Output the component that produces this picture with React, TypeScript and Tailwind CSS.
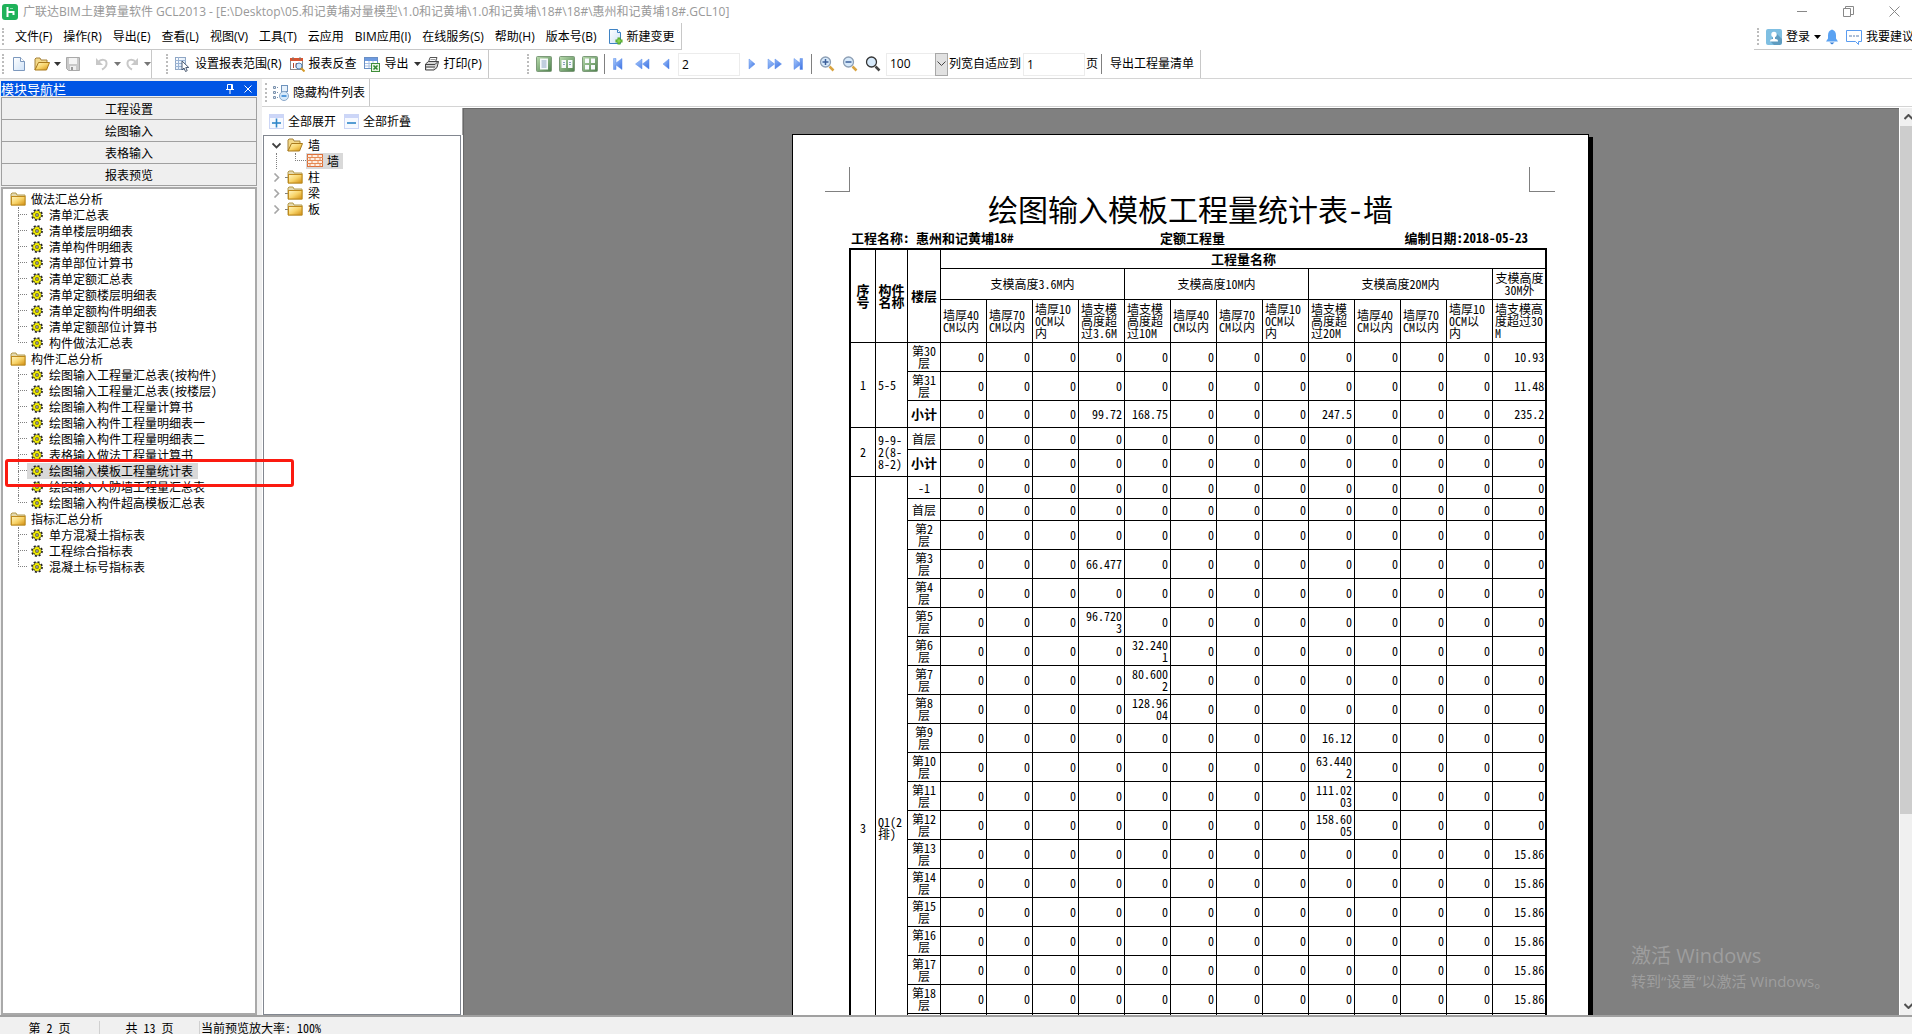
import React from "react";

const UI = "font-['Open_Sans','Noto_Sans_CJK_SC',sans-serif]";
const SONG = "font-['Noto_Sans_Mono_CJK_SC','Noto_Sans_CJK_SC',monospace]";

/* ---------- icons ---------- */

type IconProps = { className?: string };

const Gradients = () => (
  <svg width="0" height="0" className="absolute" aria-hidden="true">
    <defs>
      <linearGradient id="gold" x1="0" y1="0" x2="1" y2="1">
        <stop offset="0" stopColor="#fff6c4" />
        <stop offset="0.5" stopColor="#f8d46a" />
        <stop offset="1" stopColor="#d08d10" />
      </linearGradient>
      <linearGradient id="blue" x1="0" y1="0" x2="1" y2="1">
        <stop offset="0" stopColor="#a9cbfc" />
        <stop offset="1" stopColor="#3a6fe2" />
      </linearGradient>
      <linearGradient id="green" x1="0" y1="0" x2="1" y2="1">
        <stop offset="0" stopColor="#b9dcae" />
        <stop offset="1" stopColor="#4d7f4c" />
      </linearGradient>
      <linearGradient id="paper" x1="0" y1="0" x2="1" y2="1">
        <stop offset="0" stopColor="#ffffff" />
        <stop offset="1" stopColor="#cfe2f7" />
      </linearGradient>
    </defs>
  </svg>
);

const Svg = ({ className = "", children }: React.PropsWithChildren<IconProps>) => (
  <svg width="16" height="16" viewBox="0 0 16 16" fill="none" className={`shrink-0 ${className}`} aria-hidden="true">
    {children}
  </svg>
);

const Logo = () => (
  <Svg>
    <rect width="16" height="16" rx="3" fill="#1fb25a" />
    <path d="M5.500 3v10" stroke="#fff" strokeWidth="2" />
    <path d="M6 8h5.500v3" stroke="#fff" strokeWidth="2" />
    <path d="M8 4.500h3" stroke="#8fe0b0" strokeWidth="1" />
  </Svg>
);

const Folder = () => (
  <Svg>
    <path d="M1 14V3l1-1h4l1 2h8v10z" fill="#e3d9b0" stroke="#b39a4c" />
    <rect x="1.500" y="5.500" width="13.500" height="8.500" fill="url(#gold)" stroke="#c08a1c" />
  </Svg>
);

const FolderOpen = () => (
  <Svg>
    <path d="M1 14V3l1-1h4l1 2h6v3H5z" fill="#f3d98a" stroke="#a5823a" />
    <path d="M1 14L4.500 6.500H15.500L12.500 14z" fill="url(#gold)" stroke="#a97a1c" />
  </Svg>
);

const Gear = () => (
  <svg width="12" height="12" viewBox="0 0 12 12" className="shrink-0" aria-hidden="true">
    <circle cx="6" cy="6" r="5" fill="none" stroke="#222" strokeWidth="1.800" strokeDasharray="2 1.920" />
    <circle cx="6" cy="6" r="4.300" fill="#f7f200" stroke="#222" strokeWidth="0.500" />
    <circle cx="6" cy="6" r="1.300" fill="#fff" stroke="#333" strokeWidth="0.900" />
    <path d="M3.300 3.300l1 1M8.700 3.300l-1 1M3.300 8.700l1-1M8.700 8.700l-1-1" stroke="#333" strokeWidth="0.800" />
  </svg>
);

const Wall = () => (
  <Svg>
    <rect x="0.500" y="1.500" width="15" height="12" fill="#fdeee2" stroke="#dd6f3a" />
    <path d="M0 4.500h16M0 7.500h16M0 10.500h16M5 1.500v3M11 1.500v3M8 4.500v3M3 4.500v3M5 7.500v3M11 7.500v3M8 10.500v3M3 10.500v3M13 10.500v3M13 4.500v3" stroke="#e58a55" />
  </Svg>
);

const NewDoc = () => (
  <Svg>
    <path d="M2.500 1.500h7l4 4v9h-11z" fill="url(#paper)" stroke="#7c98bd" />
    <path d="M9.500 1.500v4h4" stroke="#7c98bd" fill="#fff" />
  </Svg>
);

const NewChange = () => (
  <Svg>
    <path d="M1.500 0.500h8l3 3v11h-11z" fill="url(#paper)" stroke="#3f83c4" />
    <path d="M9.500 0.500v3h3" stroke="#3f83c4" fill="#fff" />
    <path d="M11 8.500v7M7.500 12h7" stroke="#4aa522" strokeWidth="3" />
    <path d="M11 9.500v5M8.500 12h5" stroke="#a0e060" />
  </Svg>
);

const Save = () => (
  <Svg>
    <path d="M1.500 1.500h13v13h-11l-2-2z" fill="#c9c9c9" stroke="#a9a9a9" />
    <rect x="4" y="2" width="8" height="6" fill="#f4f4f4" />
    <rect x="5" y="10" width="6" height="4" fill="#eee" />
    <rect x="6" y="11" width="2" height="3" fill="#999" />
  </Svg>
);

const Undo = ({ className = "" }: IconProps) => (
  <Svg className={className}>
    <path d="M4 6.500C7 2.500 13 3 12.500 8c-.3 3-2.500 4.500-4.500 5.500" stroke="#c8c8c8" strokeWidth="2" />
    <path d="M2 2v7h7z" fill="#c8c8c8" />
  </Svg>
);

const Range = () => (
  <Svg>
    <rect x="1.500" y="1.500" width="10" height="12" fill="url(#paper)" stroke="#8fa6c4" />
    <path d="M1 4.500h11M1 7.500h11M1 10.500h11M4.500 1v13" stroke="#9bb4d4" />
    <path d="M8 5v9l2-2 1.500 3.500 1.700-.8L11.800 11.500h3z" fill="#fff" stroke="#4b5a70" />
  </Svg>
);

const Check = () => (
  <Svg>
    <rect x="1.500" y="2.500" width="12" height="11" fill="#fff" stroke="#8a8a8a" />
    <rect x="1" y="2" width="13" height="3" fill="#d9542f" />
    <path d="M4 1v3M11 1v3" stroke="#777" />
    <path d="M4.500 7v5M7 7.500h2.500v4H7z" stroke="#b5482b" />
    <circle cx="10" cy="10" r="3" fill="#cfe6fa" stroke="#5581b1" />
    <path d="M12 12l3.500 3.500" stroke="#d59a2a" strokeWidth="2" />
  </Svg>
);

const Export = () => (
  <Svg>
    <rect x="0.500" y="1.500" width="13" height="11" fill="#fff" stroke="#6a8fc4" />
    <rect x="1" y="2" width="12" height="3" fill="#6d9be0" />
    <path d="M1 7.500h12M1 10h12M5 5v7M9 5v7" stroke="#a8c0e4" />
    <rect x="7.500" y="7.500" width="8" height="8" fill="#e7f3e2" stroke="#3f8e3a" />
    <path d="M9.500 9.500l4 4M13.500 9.500l-4 4" stroke="#2f8530" strokeWidth="1.500" />
  </Svg>
);

const Printer = () => (
  <Svg>
    <path d="M4.500 6L6 1.500h7L11.500 6" fill="#fff" stroke="#555" />
    <path d="M6.500 3.500h5" stroke="#999" />
    <path d="M1.500 8l3-2.500h10l-1.500 6-3 2.500h-8.500z" fill="#d6d6d6" stroke="#444" />
    <path d="M1.500 8.500h9.500l3-3M2 11h9" stroke="#444" />
    <path d="M3 12.500h6" stroke="#fff" />
  </Svg>
);

const ViewFrame = ({ children }: React.PropsWithChildren) => (
  <Svg>
    <rect x="0.500" y="0.500" width="15" height="15" rx="1" fill="url(#green)" stroke="#7d9a7a" />
    {children}
  </Svg>
);
const ViewOne = () => (
  <ViewFrame>
    <rect x="4" y="2.500" width="8" height="11" fill="#f7fafc" />
    <path d="M5.500 5h5M5.500 7h5M5.500 9h5M5.500 11h5" stroke="#8aa2c0" />
  </ViewFrame>
);
const ViewTwo = () => (
  <ViewFrame>
    <path d="M2.500 4H7v8H2.500zM9 4h4.500v8H9z" fill="#f7fafc" />
    <path d="M4 6.500h2M4 8.500h2M10 6.500h2M10 8.500h2" stroke="#8aa2c0" />
  </ViewFrame>
);
const ViewFour = () => (
  <ViewFrame>
    <path d="M3 2.500h4v4.500H3zM9 2.500h4v4.500H9zM3 9h4v4.500H3zM9 9h4v4.500H9z" fill="#f7fafc" />
  </ViewFrame>
);

const Nav = ({ kind }: { kind: "first" | "rew" | "prev" | "next" | "fwd" | "last" }) => (
  <Svg>
    <g fill="url(#blue)" stroke="#5d8fea" strokeWidth="0.500">
      {kind === "first" && <path d="M3.500 2.500H6v4.500l6-4.500v11L6 9v4.500H3.500z" />}
      {kind === "rew" && <path d="M8 3v10L1.500 8zM15 3v10L8.500 8z" />}
      {kind === "prev" && <path d="M11 3v10L5 8z" />}
      {kind === "next" && <path d="M5 3v10l6-5z" />}
      {kind === "fwd" && <path d="M1 3v10l6.500-5zM8 3v10l6.500-5z" />}
      {kind === "last" && <path d="M12.500 2.500H10v4.500L4 2.500v11L10 9v4.500h2.500z" />}
    </g>
  </Svg>
);

const Magnifier = ({ sign }: { sign?: "+" | "-" }) => (
  <Svg>
    <circle cx="6.500" cy="6" r="5" fill="#d7eafb" stroke={sign ? "#8d9fb5" : "#333"} strokeWidth="1.300" />
    {sign && <path d="M3.500 6h6" stroke="#3c5f9a" strokeWidth="1.500" />}
    {sign === "+" && <path d="M6.500 3v6" stroke="#3c5f9a" strokeWidth="1.500" />}
    <path d="M10.500 10.500l4 4" stroke={sign ? "#d9a441" : "#444"} strokeWidth="2.500" />
  </Svg>
);

const Caret = ({ className = "" }: IconProps) => (
  <svg width="7" height="4" viewBox="0 0 7 4" className={`shrink-0 ${className}`} aria-hidden="true">
    <path d="M0 0h7L3.500 4z" fill="currentColor" />
  </svg>
);

const User = () => (
  <Svg>
    <rect width="16" height="16" rx="2" fill="#7fbfe2" />
    <path d="M10 4l6 6v4l-2 2H8l-4-4z" fill="#5f9cc0" />
    <circle cx="8" cy="5.500" r="2.700" fill="#fff" />
    <path d="M4 12.500c0-2.500 2-2.500 4-2.500s4 0 4 2.500z" fill="#fff" />
    <path d="M7 7h2v4H7z" fill="#fff" />
  </Svg>
);

const Bell = () => (
  <Svg>
    <path d="M8 0.500c-3 1-4 3-4 6v3L2 12.500h12L12 9.500v-3c0-3-1-5-4-6z" fill="#5aa2f2" />
    <path d="M5.500 13.500h5L8 15.500z" fill="#2b78d6" />
  </Svg>
);

const Chat = () => (
  <Svg>
    <path d="M0.500 1.500h15v11h-3v3l-3-3h-9z" fill="#fff" stroke="#5a9cf0" />
    <path d="M3 7h3M7 7h2M10 7h3" stroke="#5a7fb0" />
  </Svg>
);

const HideList = () => (
  <Svg>
    <path d="M0.500 1.500h2v2h-2zM0.500 6.500h2v2h-2zM0.500 11.500h2v2h-2z" fill="#dfe8f3" stroke="#7b92ad" />
    <path d="M4 2.500h2M4 7.500h2M4 12.500h2" stroke="#7b92ad" strokeDasharray="1 1" />
    <rect x="8.500" y="0.500" width="6" height="6" fill="#e6f1fb" stroke="#6e93bd" />
    <circle cx="11" cy="11" r="4.500" fill="#d6e9fa" stroke="#8aa8c8" />
    <path d="M8.500 11h5" stroke="#2a7fd0" strokeWidth="1.500" />
  </Svg>
);

const Box = ({ plus }: { plus?: boolean }) => (
  <Svg>
    <rect x="0.500" y="0.500" width="14" height="14" fill="#f6f9ff" stroke="#ccd6f6" />
    <rect x="1" y="1" width="13" height="3" fill="#ccd6f8" />
    <path d="M3 9h9" stroke="#2f86c8" strokeWidth="1.600" />
    {plus && <path d="M7.500 4.500v9" stroke="#2f86c8" strokeWidth="1.600" />}
  </Svg>
);

const Chevron = ({ open }: { open?: boolean }) => (
  <svg width="9" height="9" viewBox="0 0 9 9" fill="none" className="shrink-0" aria-hidden="true">
    {open ? (
      <path d="M0.500 2.500L4.500 6.500L8.500 2.500" stroke="#404040" strokeWidth="1.800" />
    ) : (
      <path d="M2.500 0.500L6.500 4.500L2.500 8.500" stroke="#a6a6a6" strokeWidth="1.600" />
    )}
  </svg>
);

/* ---------- bars ---------- */

const Grip = () => <span className="my-1 w-[2px] self-stretch border-l-2 border-dotted border-[#bcbcbc]" />;
const Sep = ({ className = "" }: IconProps) => <span className={`h-5 w-px bg-[#808080] ${className}`} />;

const TitleBar = () => (
  <header className="flex h-[23px] shrink-0 items-center pl-[2px] pr-3 text-[#999]">
    <Logo />
    <h1 className="ml-[5px] grow whitespace-pre text-[12px]">
      广联达BIM土建算量软件 GCL2013 - [E:\Desktop\05.和记黄埔对量模型\1.0和记黄埔\1.0和记黄埔\18#\18#\惠州和记黄埔18#.GCL10]
    </h1>
    <div className="flex items-center gap-[35px]">
      <button aria-label="最小化">
        <svg width="11" height="11" fill="none" stroke="#888"><path d="M0 5.500h10" /></svg>
      </button>
      <button aria-label="还原">
        <svg width="11" height="11" fill="none" stroke="#888"><path d="M0.500 2.500h7v8h-7zM2.500 2.500v-2h8v8h-3" /></svg>
      </button>
      <button aria-label="关闭">
        <svg width="11" height="11" fill="none" stroke="#888"><path d="M0.500 0.500l10 10M10.500 0.500l-10 10" /></svg>
      </button>
    </div>
  </header>
);

const MENUS = ["文件(F)", "操作(R)", "导出(E)", "查看(L)", "视图(V)", "工具(T)", "云应用", "BIM应用(I)", "在线服务(S)", "帮助(H)", "版本号(B)"];

const MenuBar = () => (
  <div className="flex h-[27px] shrink-0 justify-between text-[12px]">
    <nav className="flex items-center gap-[11px] border-b border-r border-[#c8c8c8] pl-[2px] pr-[6px] pt-px">
      <Grip />
      {MENUS.map((m) => (
        <button key={m} className="whitespace-nowrap">{m}</button>
      ))}
      <button className="flex items-center gap-[3px] whitespace-nowrap"><NewChange />新建变更</button>
    </nav>
    <div className="flex w-[158px] items-center overflow-hidden border-b border-[#c8c8c8] pl-[3px] pt-px">
      <Grip />
      <button className="ml-[7px] flex shrink-0 items-center gap-1"><User />登录<Caret /></button>
      <button className="ml-[3px] shrink-0" aria-label="通知"><Bell /></button>
      <button className="ml-[6px] flex shrink-0 items-center gap-1 whitespace-nowrap"><Chat />我要建议</button>
    </div>
  </div>
);

const field = "h-[23px] w-[62px] border border-[#ececec] bg-white px-[3px] outline-none";

const Toolbar = () => (
  <div className="flex h-[29px] shrink-0 items-stretch border-b border-[#d4d4d4] text-[12px]">
    <div className="flex w-[152px] items-center border-r border-[#c8c8c8] pl-[2px]">
      <Grip />
      <button className="ml-[7px]" aria-label="新建"><NewDoc /></button>
      <button className="ml-[7px] flex items-center gap-1" aria-label="打开"><FolderOpen /><Caret className="text-[#333]" /></button>
      <button className="ml-1" aria-label="保存"><Save /></button>
      <Sep className="ml-[6px]" />
      <button className="ml-[7px] flex items-center gap-1" aria-label="撤销"><Undo /><Caret className="text-[#777]" /></button>
      <button className="ml-[3px] flex items-center gap-1" aria-label="重做"><Undo className="-scale-x-100" /><Caret className="text-[#777]" /></button>
    </div>
    <div className="ml-[14px] flex w-[323px] items-center whitespace-nowrap border-r border-[#c8c8c8]">
      <Grip />
      <button className="ml-[6px] flex items-center gap-[5px]"><Range />设置报表范围(R)</button>
      <button className="ml-[7px] flex items-center gap-1"><Check />报表反查</button>
      <button className="ml-[7px] flex items-center gap-[5px]"><Export />导出<Caret className="text-[#333]" /></button>
      <button className="ml-[3px] flex items-center gap-1"><Printer />打印(P)</button>
    </div>
    <div className="ml-[38px] flex items-center whitespace-nowrap border-r border-[#c8c8c8] pr-[6px]">
      <Grip />
      <div className="ml-[7px] flex gap-[7px]">
        <button aria-label="单页"><ViewOne /></button>
        <button aria-label="双页"><ViewTwo /></button>
        <button aria-label="四页"><ViewFour /></button>
      </div>
      <Sep className="ml-[6px]" />
      <div className="ml-[5px] flex gap-2">
        <button aria-label="首页"><Nav kind="first" /></button>
        <button aria-label="快退"><Nav kind="rew" /></button>
        <button aria-label="上一页"><Nav kind="prev" /></button>
      </div>
      <input aria-label="页码" defaultValue="2" className={`ml-1 ${field}`} />
      <div className="ml-1 flex gap-[7px]">
        <button aria-label="下一页"><Nav kind="next" /></button>
        <button aria-label="快进"><Nav kind="fwd" /></button>
        <button aria-label="末页"><Nav kind="last" /></button>
      </div>
      <Sep className="ml-[5px]" />
      <div className="ml-[7px] flex gap-[7px]">
        <button aria-label="放大"><Magnifier sign="+" /></button>
        <button aria-label="缩小"><Magnifier sign="-" /></button>
        <button aria-label="缩放"><Magnifier /></button>
      </div>
      <div className="relative ml-[5px]">
        <select aria-label="显示比例" defaultValue="100" className={`${field} appearance-none`}>
          <option>50</option>
          <option>100</option>
          <option>200</option>
        </select>
        <span className="pointer-events-none absolute inset-y-0 right-0 flex w-[13px] items-center justify-center border border-[#a8a8a8] bg-[#e1e1e1]">
          <svg width="9" height="6" fill="none" stroke="#444"><path d="M0.500 0.500l4 4l4-4" /></svg>
        </span>
      </div>
      <label htmlFor="fit" className="ml-px">列宽自适应到</label>
      <input id="fit" defaultValue="1" className={`ml-[2px] ${field}`} />
      <span className="ml-px">页</span>
      <Sep className="ml-[3px]" />
      <button className="ml-2">导出工程量清单</button>
    </div>
  </div>
);

/* ---------- left panel ---------- */

const TREE = [
  { title: "做法汇总分析", items: ["清单汇总表", "清单楼层明细表", "清单构件明细表", "清单部位计算书", "清单定额汇总表", "清单定额楼层明细表", "清单定额构件明细表", "清单定额部位计算书", "构件做法汇总表"] },
  { title: "构件汇总分析", items: ["绘图输入工程量汇总表(按构件)", "绘图输入工程量汇总表(按楼层)", "绘图输入构件工程量计算书", "绘图输入构件工程量明细表一", "绘图输入构件工程量明细表二", "表格输入做法工程量计算书", "绘图输入模板工程量统计表", "绘图输入人防墙工程量汇总表", "绘图输入构件超高模板汇总表"] },
  { title: "指标汇总分析", items: ["单方混凝土指标表", "工程综合指标表", "混凝土标号指标表"] },
];
const CURRENT = "绘图输入模板工程量统计表";

const SidePanel = () => (
  <aside className={`relative flex w-[262px] shrink-0 flex-col bg-[#f0f0f0] pl-px pr-[5px] pt-[2px] text-[12px] ${SONG}`}>
    <div className="flex h-[15px] shrink-0 items-center bg-[#0055e5] pr-[5px] text-[13px] leading-[15px] text-white">
      <h2 className="grow">模块导航栏</h2>
      <button aria-label="固定">
        <svg width="8" height="10" fill="none" stroke="#fff"><path d="M1.500 0.500h5v5h-5zM5.500 0.500v5M0 5.500h8M4 6v4" /></svg>
      </button>
      <button aria-label="关闭面板" className="ml-[10px]">
        <svg width="8" height="8" fill="none" stroke="#fff"><path d="M0.500 0.500l7 7M7.500 0.500l-7 7" /></svg>
      </button>
    </div>
    <div className="mt-px flex flex-col border-t border-[#a0a0a0]">
      {["工程设置", "绘图输入", "表格输入", "报表预览"].map((t) => (
        <button key={t} className="h-[22px] border-x border-b border-[#a0a0a0] bg-[#efefef]">{t}</button>
      ))}
    </div>
    <div className="mt-px grow overflow-hidden border-2 border-[#a9a9a9] bg-white pl-[7px] pt-[2px] leading-4">
      {TREE.map((g) => (
        <section key={g.title}>
          <button className="flex h-4 items-center gap-[5px]"><Folder />{g.title}</button>
          <ul className="pl-2">
            {g.items.map((t, i) => (
              <li key={t} className="flex h-4 items-center">
                <span className="h-4 w-[9px] shrink-0">
                  <span className="block h-2 border-b border-l border-dotted border-[#808080]" />
                  {i < g.items.length - 1 && <span className="block h-2 border-l border-dotted border-[#808080]" />}
                </span>
                <button className={`flex items-center gap-[6px] whitespace-nowrap pl-1 pr-[5px] ${t === CURRENT ? "bg-[#d9d9d9]" : ""}`}>
                  <Gear />{t}
                </button>
              </li>
            ))}
          </ul>
        </section>
      ))}
    </div>
    <div className="pointer-events-none absolute left-[5px] top-[380px] z-10 h-7 w-[289px] rounded-[3px] border-[3px] border-[#fb1a10]" />
  </aside>
);

/* ---------- component tree ---------- */

const ComponentPanel = () => (
  <section className="flex w-[201px] shrink-0 flex-col">
    <div className="flex h-[27px] shrink-0 items-center gap-2 border-r border-[#a0a0a0] pl-[7px] text-[12px]">
      <button className="flex items-center gap-[3px]"><Box plus />全部展开</button>
      <button className="flex items-center gap-[3px]"><Box />全部折叠</button>
    </div>
    <div className={`ml-px mr-[2px] grow border border-[#828790] pl-2 pt-px text-[12px] leading-4 ${SONG}`}>
      <button className="flex h-4 items-center"><Chevron open /><span className="w-[6px]" /><FolderOpen /><span className="ml-[5px]">墙</span></button>
      <div className="flex h-4 items-center pl-1">
        <span className="h-4 w-[19px] border-l border-dotted border-[#808080]" />
        <span className="-mt-2 h-2 w-[11px] border-b border-l border-dotted border-[#808080]" />
        <button className="flex h-4 items-center gap-1 bg-[#d9d9d9] pl-px pr-1"><Wall />墙</button>
      </div>
      {["柱", "梁", "板"].map((t) => (
        <button key={t} className="flex h-4 items-center">
          <Chevron />
          <span className="ml-1 w-[2px] border-b border-dotted border-[#808080]" />
          <Folder />
          <span className="ml-[5px]">{t}</span>
        </button>
      ))}
    </div>
  </section>
);

/* ---------- report ---------- */

type Row = { floor: string; h: "a" | "b" | "c" | "d"; vals?: Record<number, string>; last?: string };
type Group = { no: string; name: string; rows: Row[] };

const H = { a: "h-[29px]", b: "h-[27px]", c: "h-[22px]", d: "h-5" };

const floorVals: Record<number, Record<number, string>> = {
  3: { 3: "66.477" },
  5: { 3: "96.7203" },
  6: { 4: "32.2401" },
  7: { 4: "80.6002" },
  8: { 4: "128.9604" },
  9: { 8: "16.12" },
  10: { 8: "63.4402" },
  11: { 8: "111.0203" },
  12: { 8: "158.6005" },
};

const GROUPS: Group[] = [
  {
    no: "1",
    name: "5-5",
    rows: [
      { floor: "第30层", h: "a", last: "10.93" },
      { floor: "第31层", h: "a", last: "11.48" },
      { floor: "小计", h: "b", vals: { 3: "99.72", 4: "168.75", 8: "247.5" }, last: "235.2" },
    ],
  },
  { no: "2", name: "9-9-2(8-8-2)", rows: [{ floor: "首层", h: "c" }, { floor: "小计", h: "b" }] },
  {
    no: "3",
    name: "Q1(2排)",
    rows: [
      { floor: "-1", h: "c" },
      { floor: "首层", h: "c" },
      ...Array.from({ length: 22 }, (_, i): Row => ({
        floor: `第${i + 2}层`,
        h: "a",
        vals: floorVals[i + 2],
        last: i + 2 > 12 ? "15.86" : "0",
      })),
      { floor: "小计", h: "d" },
    ],
  },
];

const cell = "border-b border-r border-black break-all p-0 px-[2px] leading-[12px]";
const lastCell = "border-b border-black break-all p-0 pl-[2px] pr-px leading-[12px]";
const BOLD = "text-[13px] font-bold";
const wallCols = (m: string) => [`墙支模高度超过${m}`, "墙厚40CM以内", "墙厚70CM以内", "墙厚100CM以内"];
const SUB = ["墙厚40CM以内", "墙厚70CM以内", "墙厚100CM以内", "墙支模高度超过3.6M", ...wallCols("10M"), ...wallCols("20M")];

const Report = () => (
  <article className={`h-[1123px] w-[797px] shrink-0 border border-black bg-white px-8 pt-8 shadow-[4px_3px_0_0_#000] ${SONG}`}>
    <div className="flex justify-between pr-px">
      <span className="h-[25px] w-[25px] border-b border-r border-[#808080]" />
      <span className="h-[25px] w-[26px] border-b border-l border-[#808080]" />
    </div>
    <div className="mx-6">
      <h2 className="h-[37px] text-center text-[30px] leading-[32px]">绘图输入模板工程量统计表-墙</h2>
      <div className="flex h-[19px] justify-between pl-[2px] pr-1 text-[13px] font-bold leading-[18px]">
        <span className="w-[309px]">工程名称: 惠州和记黄埔18#</span>
        <span className="grow">定额工程量</span>
        <span>编制日期:2018-05-23</span>
      </div>
      <div className="w-[698px] border-2 border-black">
        <table className="w-full table-fixed border-separate border-spacing-0 text-[12px]">
          <colgroup>
            <col className="w-[25px]" />
            <col className="w-8" />
            <col className="w-[33px]" />
            {SUB.map((_, i) => (
              <col key={i} className="w-[46px]" />
            ))}
            <col className="w-[52px]" />
          </colgroup>
          <thead>
            <tr className="h-[19px]">
              <th rowSpan={3} className={`${cell} ${BOLD}`}>序号</th>
              <th rowSpan={3} className={`${cell} ${BOLD}`}>构件名称</th>
              <th rowSpan={3} className={`${cell} ${BOLD}`}>楼层</th>
              <th colSpan={13} className={`${lastCell} ${BOLD}`}>工程量名称</th>
            </tr>
            <tr className="h-[31px]">
              {["3.6M", "10M", "20M"].map((m) => (
                <th key={m} colSpan={4} className={`${cell} font-normal`}>支模高度{m}内</th>
              ))}
              <th className={`${lastCell} font-normal`}>支模高度30M外</th>
            </tr>
            <tr className="h-[43px] text-left">
              {SUB.map((s, i) => (
                <th key={i} className={`${cell} font-normal`}>{s}</th>
              ))}
              <th className={`${lastCell} font-normal`}>墙支模高度超过30M</th>
            </tr>
          </thead>
          <tbody>
            {GROUPS.map((g) =>
              g.rows.map((r, ri) => (
                <tr key={g.no + ri} className={H[r.h]}>
                  {ri === 0 && <td rowSpan={g.rows.length} className={`${cell} text-center`}>{g.no}</td>}
                  {ri === 0 && <td rowSpan={g.rows.length} className={cell}>{g.name}</td>}
                  <td className={`${cell} text-center ${r.floor === "小计" ? BOLD : ""}`}>{r.floor}</td>
                  {SUB.map((_, i) => (
                    <td key={i} className={`${cell} text-right`}>{r.vals?.[i] ?? "0"}</td>
                  ))}
                  <td className={`${lastCell} text-right`}>{r.last ?? "0"}</td>
                </tr>
              )),
            )}
          </tbody>
        </table>
      </div>
    </div>
  </article>
);

const Viewer = () => (
  <main className="relative flex min-w-0 grow">
    <div className="flex grow justify-center overflow-hidden border-l border-t border-[#696969] bg-[#808080] pl-[18px] pt-[25px]">
      <Report />
    </div>
    <div className="flex w-[13px] shrink-0 flex-col items-end overflow-hidden border-l border-white bg-[#f0f0f0]">
      <button aria-label="向上滚动" className="flex h-[18px] w-full shrink-0 items-center pl-1">
        <svg width="9" height="6" fill="none" stroke="#505050" strokeWidth="2"><path d="M0.500 5l4-4l4 4" /></svg>
      </button>
      <div className="w-full grow-[79] bg-[#cdcdcd]" />
      <div className="w-full grow-[21]" />
      <button aria-label="向下滚动" className="flex h-[18px] w-full shrink-0 items-center pl-1">
        <svg width="9" height="6" fill="none" stroke="#505050" strokeWidth="2"><path d="M0.500 1l4 4l4-4" /></svg>
      </button>
    </div>
    <div className="pointer-events-none absolute bottom-[23px] right-[84px] w-[197px] whitespace-nowrap text-[#9e9e9e]">
      <p className="text-[20px] leading-[28px]">激活 Windows</p>
      <p className="text-[15px] leading-[22px]">转到“设置”以激活 Windows。</p>
    </div>
  </main>
);

export default function App() {
  return (
    <div className={`flex h-screen flex-col overflow-hidden bg-white text-black ${UI}`}>
      <Gradients />
      <TitleBar />
      <MenuBar />
      <Toolbar />
      <div className="flex min-h-0 grow">
        <SidePanel />
        <div className="flex min-w-0 grow flex-col">
          <div className="flex h-7 shrink-0 border-b border-[#d4d4d4] text-[12px]">
            <div className="flex items-center border-r border-[#c8c8c8] pl-[3px] pr-1">
              <Grip />
              <button className="ml-[6px] flex items-center gap-1"><HideList />隐藏构件列表</button>
            </div>
          </div>
          <div className="flex min-h-0 grow pt-px">
            <ComponentPanel />
            <Viewer />
          </div>
        </div>
      </div>
      <footer className={`flex h-[19px] shrink-0 border-t-2 border-[#a0a0a0] bg-[#f0f0f0] pt-1 text-[12px] leading-[14px] ${SONG}`}>
        <span className="w-[100px] border-r border-[#d0d0d0] text-center">第 2 页</span>
        <span className="w-[100px] border-r border-[#d0d0d0] text-center">共 13 页</span>
        <span className="pl-px">当前预览放大率: 100%</span>
      </footer>
    </div>
  );
}
